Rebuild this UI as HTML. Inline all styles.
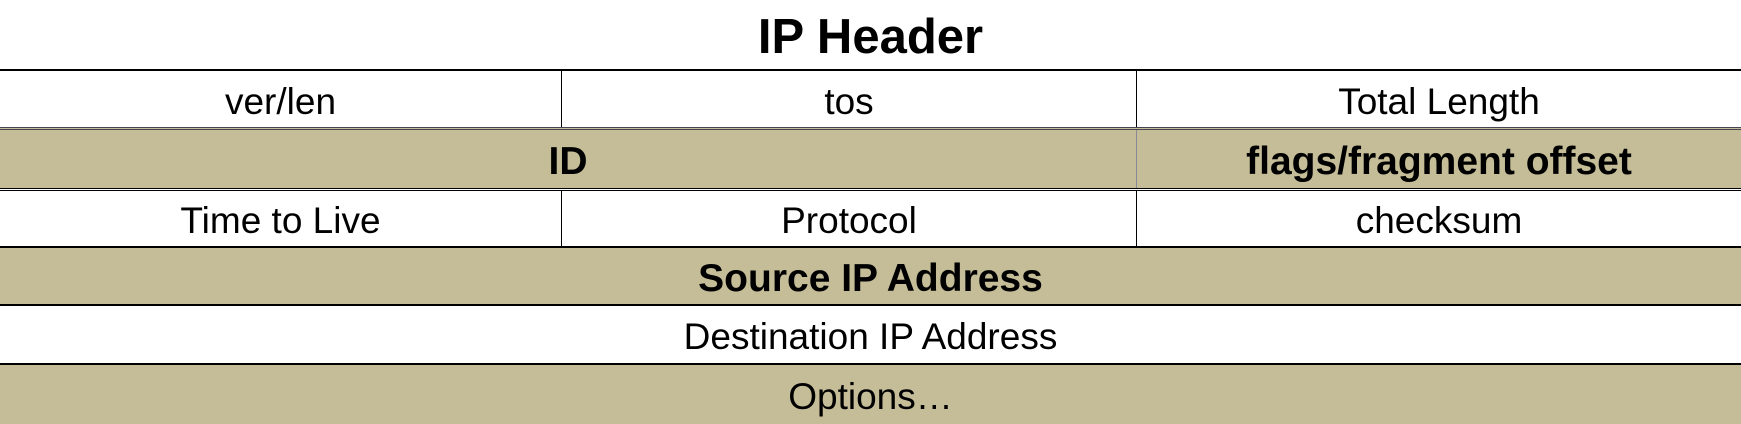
<!DOCTYPE html>
<html><head><style>
body{margin:0;width:1741px;height:424px;background:#fff;overflow:hidden;font-family:"Liberation Sans",sans-serif;color:#000}
.t{position:absolute;left:0;top:0;width:1741px;height:70px;text-align:center;font-weight:bold;font-size:49px;line-height:74px}
.r{position:absolute;left:0;width:1741px;border-top:2px solid #000;box-sizing:border-box}
.c{position:absolute;top:0;height:100%;display:flex;align-items:center;justify-content:center;font-size:37px;padding-top:4px;box-sizing:border-box}
.tan{background:#C4BD97}
.b .c{font-size:39px}
.b{font-weight:bold}
</style></head><body>
<div class="t">IP Header</div>
<div class="r" style="top:69px;height:59px">
 <div class="c" style="left:0;width:562px;border-right:1px solid #000">ver/len</div>
 <div class="c" style="left:562px;width:575px;border-right:1px solid #000">tos</div>
 <div class="c" style="left:1137px;width:604px">Total Length</div>
</div>
<div class="r tan b" style="top:127px;height:62px;border-top:3px double #445">
 <div class="c" style="left:0;width:1137px;border-right:1px solid #889">ID</div>
 <div class="c" style="left:1137px;width:604px">flags/fragment offset</div>
</div>
<div class="r" style="top:188px;height:59px;border-top:3px double #000">
 <div class="c" style="left:0;width:562px;border-right:1px solid #000">Time to Live</div>
 <div class="c" style="left:562px;width:575px;border-right:1px solid #000">Protocol</div>
 <div class="c" style="left:1137px;width:604px">checksum</div>
</div>
<div class="r tan b" style="top:246px;height:60px">
 <div class="c" style="left:0;width:1741px">Source IP Address</div>
</div>
<div class="r" style="top:304px;height:60px">
 <div class="c" style="left:0;width:1741px">Destination IP Address</div>
</div>
<div class="r tan" style="top:363px;height:61px">
 <div class="c" style="left:0;width:1741px">Options…</div>
</div>
</body></html>
